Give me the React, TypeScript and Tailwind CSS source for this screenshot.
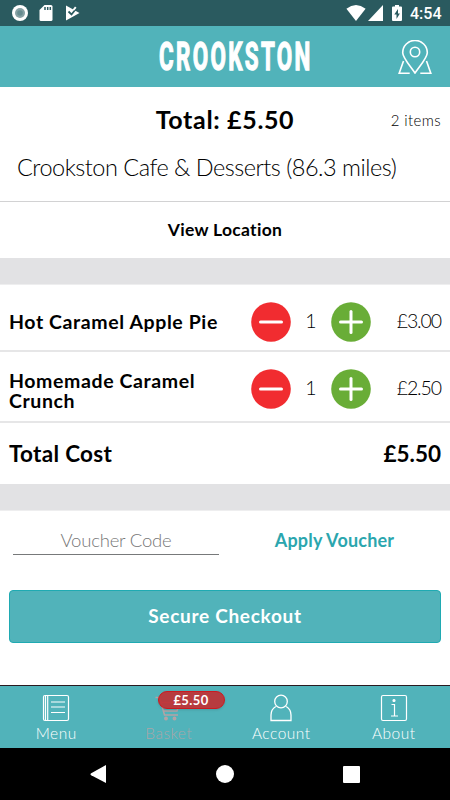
import { useState } from 'react'
import type { ReactNode } from 'react'

interface BasketItem {
  id: string
  name: string
  nameClass: string
  rowClass: string
  quantity: number
  price: number
}

const initialItems: BasketItem[] = [
  {
    id: 'apple-pie',
    name: 'Hot Caramel Apple Pie',
    nameClass: '',
    rowClass: 'h-[67px] border-b-2 pt-2',
    quantity: 1,
    price: 3,
  },
  {
    id: 'caramel-crunch',
    name: 'Homemade Caramel Crunch',
    nameClass: 'pt-1',
    rowClass: 'h-[71px] border-b-2 pt-1',
    quantity: 1,
    price: 2.5,
  },
]

const formatPrice = (value: number) => `£${value.toFixed(2)}`

function StatusBar() {
  return (
    <div className="flex h-[26px] shrink-0 items-center justify-between bg-[#2a5a5f] pl-3 pr-[9px] text-white">
      <div className="flex items-center">
        <svg width="16" height="16" viewBox="0 0 16 16">
          <circle cx="8" cy="8" r="8" fill="#fff" />
          <circle cx="8" cy="8" r="5" fill="#86a1a4" />
          <circle cx="8" cy="8" r="2.8" fill="#668c90" />
        </svg>
        <svg className="ml-[11px]" width="14" height="16" viewBox="0 0 14 16">
          <path d="M5.5 0H12q1.5 0 1.5 1.5v13Q13.500 16 12 16H2Q.5 16 .5 14.500V5Z" fill="#fff" />
          <path d="M6 2v3M8.700 2v3M11.300 2v3" stroke="#2a5a5f" strokeWidth="1.500" />
        </svg>
        <svg className="ml-3" width="15" height="16" viewBox="0 0 15 16">
          <path d="M1 .5 14.500 8 1 15.500Z" fill="#fff" />
          <path d="m3.500 6.500 3 3 6-7.500" fill="none" stroke="#2a5a5f" strokeWidth="1.800" />
          <path d="M7.500 4.800 10 1.500l1.500 1.200-2.300 2.800Z" fill="#fff" />
        </svg>
      </div>
      <div className="flex items-center">
        <svg width="20" height="16" viewBox="0 0 20 16">
          <path d="M.4 3.700Q10-3.700 19.600 3.700L10 16Z" fill="#fff" />
        </svg>
        <svg className="ml-[2px]" width="15" height="16" viewBox="0 0 15 16">
          <path d="M15 0v16H0Z" fill="#fff" />
        </svg>
        <svg className="ml-[9px]" width="10" height="16" viewBox="0 0 10 16">
          <path d="M3 0h4v1.500h2q1 0 1 1V15q0 1-1 1H1q-1 0-1-1V2.500q0-1 1-1h2Z" fill="#fff" />
          <path d="M6 4 2.300 9.500h2.200V14l3.400-5.500H6Z" fill="#2a5a5f" />
        </svg>
        <span className="ml-2 w-[31px] whitespace-nowrap pt-[2px] font-['Roboto'] text-base font-medium leading-none">
          4:54
        </span>
      </div>
    </div>
  )
}

function Header() {
  return (
    <header className="flex h-[61px] shrink-0 items-center bg-[#51b3ba] pl-[155px] pr-[18px]">
      {/* condensed wordmark: the view box is wider than the drawing, so the letters narrow */}
      <svg width="160" height="56" viewBox="0 0 272 56" preserveAspectRatio="none">
        <text
          x="7"
          y="41.200"
          textLength="257"
          fill="#fff"
          stroke="#fff"
          strokeWidth="1.100"
          vectorEffect="non-scaling-stroke"
          fontFamily="Roboto, sans-serif"
          fontSize="38"
          fontWeight="700"
        >
          CROOKSTON
        </text>
      </svg>
      <button className="ml-auto" aria-label="Locations">
        <svg width="34" height="34" viewBox="0 0 34 34" fill="none" stroke="#fff" strokeWidth="1.600">
          <path d="M17 33C11 24.500 4.700 17.500 4.700 12.700a12.300 12.300 0 0 1 24.600 0C29.300 17.500 23 24.500 17 33Z" />
          <circle cx="17" cy="12" r="4.700" />
          <path d="M5.500 21 1.200 33.200h10.500M28.500 21l4.300 12.200H22.300" />
        </svg>
      </button>
    </header>
  )
}

function QuantityButton({ kind, onClick }: { kind: 'minus' | 'plus'; onClick: () => void }) {
  return (
    <button onClick={onClick} aria-label={kind}>
      <svg width="40" height="40" viewBox="0 0 40 40" stroke="#fff" strokeWidth="3" strokeLinecap="round">
        <circle cx="20" cy="20" r="19.800" fill={kind === 'minus' ? '#f12c30' : '#69ad37'} stroke="none" />
        <path d="M9.500 20h21" />
        {kind === 'plus' && <path d="M20 9.500v21" />}
      </svg>
    </button>
  )
}

function BasketRow({ item, onChange }: { item: BasketItem; onChange: (delta: number) => void }) {
  return (
    <div className={`flex items-center border-[#e6e6e7] px-[9px] ${item.rowClass}`}>
      <span className={`w-[242px] pr-5 text-[19.500px] font-bold leading-5 tracking-[0.6px] ${item.nameClass}`}>
        {item.name}
      </span>
      <QuantityButton kind="minus" onClick={() => onChange(-1)} />
      <span className="w-10 pb-[2px] text-center text-[19.500px] font-light">{item.quantity}</span>
      <QuantityButton kind="plus" onClick={() => onChange(1)} />
      <span className="ml-auto pb-[2px] text-[19.500px] font-light tracking-[-1.1px]">{formatPrice(item.price)}</span>
    </div>
  )
}

function Tab({ label, labelClass, children }: { label: string; labelClass?: string; children: ReactNode }) {
  return (
    <button className="relative flex w-1/4 flex-col items-center pt-2">
      {children}
      <span className={`mt-px text-[15.500px] font-light leading-5 tracking-[0.5px] ${labelClass ?? ''}`}>{label}</span>
    </button>
  )
}

function TabBar({ total }: { total: number }) {
  return (
    <nav className="flex h-[63px] shrink-0 border-t border-[#2a1a20] bg-[#51b3ba] text-white">
      <Tab label="Menu">
        <svg width="28" height="28" viewBox="0 0 28 28" fill="none" stroke="#fff" strokeWidth="1.200">
          <rect x="1.500" y="1.500" width="25" height="25" rx="1.500" />
          <path d="M3.500 1.500v25M5.700 1.500v25M9 8h14M9 13h14M9 18.500h14" />
        </svg>
      </Tab>
      <Tab label="Basket" labelClass="text-[#a9a6a9]">
        <svg width="28" height="28" viewBox="0 0 28 28" fill="none" stroke="#b5a3a5" strokeWidth="1.500">
          <path d="M.5 3.500h4l5 17.500H23M6 8.500h18.500L22 17H8.500" />
          <circle cx="11" cy="24.500" r="1.200" fill="#b5a3a5" />
          <circle cx="19.500" cy="24.500" r="1.200" fill="#b5a3a5" />
        </svg>
        <span className="absolute left-[45px] top-[5px] h-[18px] w-[67px] rounded-full border border-[#cc1a20] bg-[#c22d32]/90 text-center text-[13px] font-bold leading-4 tracking-[0.4px] text-white shadow">
          {formatPrice(total)}
        </span>
      </Tab>
      <Tab label="Account">
        <svg width="28" height="28" viewBox="0 0 28 28" fill="none" stroke="#fff" strokeWidth="1.300">
          <circle cx="14" cy="7.500" r="6.300" />
          <path d="M8.800 12.500C5.500 14.500 4 17.500 4 21v5.500h20V21c0-3.500-1.500-6.500-4.800-8.500" />
        </svg>
      </Tab>
      <Tab label="About">
        <svg width="28" height="28" viewBox="0 0 28 28" fill="none" stroke="#fff" strokeWidth="1.200">
          <rect x="1.500" y="1.500" width="25" height="25" rx="1.500" />
          <path d="M11.500 10.500h3v11.500M11 22h7" />
          <circle cx="14" cy="6.500" r="1" fill="#fff" />
        </svg>
      </Tab>
    </nav>
  )
}

function SystemNav() {
  return (
    <div className="flex h-[52px] shrink-0 items-center justify-between bg-black px-[90px]">
      <svg width="16" height="18" viewBox="0 0 16 18">
        <path d="M16 0v18L1.200 10.200q-1.500-1 0-2Z" fill="#fff" />
      </svg>
      <div className="h-[18px] w-[18px] rounded-full bg-white" />
      <div className="h-[17px] w-[17px] rounded-[1px] bg-white" />
    </div>
  )
}

export default function App() {
  const [items, setItems] = useState(initialItems)

  const total = items.reduce((sum, item) => sum + item.price * item.quantity, 0)
  const count = items.reduce((sum, item) => sum + item.quantity, 0)

  const changeQuantity = (id: string, delta: number) => {
    setItems((prev) =>
      prev.map((item) => (item.id === id ? { ...item, quantity: Math.max(0, item.quantity + delta) } : item))
    )
  }

  return (
    <div className="flex h-[800px] w-[450px] flex-col overflow-hidden bg-white font-['Lato','Liberation_Sans',sans-serif] text-black">
      <StatusBar />
      <Header />

      <main className="flex-1">
        <section className="h-[115px] border-b border-[#d2d2d3]">
          <div className="grid grid-cols-[1fr_auto_1fr] items-center px-[9px] pt-[14px]">
            <span />
            <h1 className="text-[25px] font-bold leading-9 tracking-[0.65px]">Total: {formatPrice(total)}</h1>
            <span className="pt-[2px] text-right text-[15px] font-light tracking-[0.4px]">{count} items</span>
          </div>
          <p className="mt-3 pl-[17px] text-[23.500px] font-light leading-9 tracking-[-0.5px]">
            Crookston Cafe &amp; Desserts (86.3 miles)
          </p>
        </section>

        <button className="flex h-14 w-full items-center justify-center pt-px text-[17.500px] font-bold tracking-[0.3px]">
          View Location
        </button>
        <div className="h-[27px] border-b border-[#eeeeef] bg-[#e2e2e4]" />

        {items.map((item) => (
          <BasketRow key={item.id} item={item} onChange={(delta) => changeQuantity(item.id, delta)} />
        ))}
        <div className="flex h-[61px] items-center justify-between px-[9px] text-[22.500px] font-bold">
          <span className="tracking-[0.3px]">Total Cost</span>
          <span>{formatPrice(total)}</span>
        </div>
        <div className="h-[27px] border-b border-[#eeeeef] bg-[#e2e2e4]" />

        <div className="flex pl-[13px] pt-[14px]">
          <input
            placeholder="Voucher Code"
            className="h-[30px] w-[206px] border-b border-[#77797a] pb-0 pt-px text-center text-[18.500px] font-light tracking-[-0.2px] outline-none placeholder:text-[#777]"
          />
          <button className="h-[30px] flex-1 pt-px text-center text-[18px] font-bold tracking-[0.2px] text-[#2ba6ae]">
            Apply Voucher
          </button>
        </div>

        <div className="px-[9px] pt-[35px]">
          <button className="h-[53px] w-full rounded border border-[#1faab2] bg-[#51b3ba] text-[19px] font-bold tracking-[0.7px] text-white">
            Secure Checkout
          </button>
        </div>
      </main>

      <TabBar total={total} />
      <SystemNav />
    </div>
  )
}
